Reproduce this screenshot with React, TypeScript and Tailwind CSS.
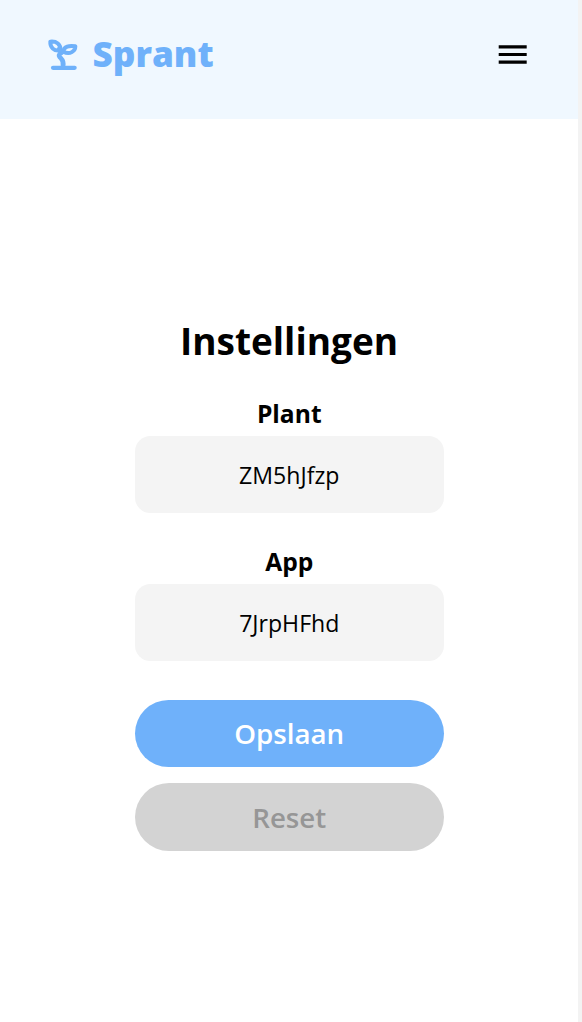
import React from "react";

function SproutIcon() {
  return (
    <svg
      className="h-[50px] w-[50px] shrink-0"
      viewBox="0 0 150 150"
      fill="none"
      stroke="#6fb1fa"
      strokeWidth="12"
      strokeLinecap="round"
      strokeLinejoin="round"
      aria-hidden="true"
    >
      <path d="M39 113.500H104" strokeWidth="12.500" />
      <path d="M69 108C71 99 70 92 63 85C54 77 56 72 66 67" strokeWidth="14" />
      <path d="M61 61C63 43 49 33 31 35C30 52 42 65 61 61Z" />
      <path d="M55 55L66 68" strokeWidth="8" />
      <path d="M70 65C71 49 88 46 106 49C106 63 90 76 70 65Z" />
    </svg>
  );
}

function MenuButton() {
  return (
    <button type="button" aria-label="Menu" className="mt-[45px] mr-[51px] h-[19px] w-7">
      <svg className="block h-[19px] w-7" viewBox="0 0 28 19" overflow="visible" aria-hidden="true">
        <path d="M-0.300 0.200H27.700V3.400H-0.300ZM-0.300 7.900H27.700V11.100H-0.300ZM-0.300 15.600H27.700V18.800H-0.300Z" fill="#000" />
      </svg>
    </button>
  );
}

function Field({ label, value }: { label: string; value: string }) {
  return (
    <div className="flex flex-col items-center">
      <span className="h-[39px] text-[24.600px] leading-[34px] font-bold">{label}</span>
      <div className="flex h-[77px] w-full items-center justify-center rounded-[15.400px] bg-[#f4f4f4] pt-[2px] text-[23.100px]">
        {value}
      </div>
    </div>
  );
}

export default function App() {
  return (
    <div className="flex h-[1022px] w-[582px] overflow-hidden bg-[#f3f3f3] font-['Open_Sans',sans-serif] text-black">
      <div className="flex w-[578px] flex-col bg-white">
        <header className="flex h-[119px] shrink-0 items-start justify-between bg-[#f0f8ff]">
          <div className="flex pt-[30px] pl-10">
            <SproutIcon />
            <span className="ml-[2.500px] text-[35.200px] leading-[47px] font-extrabold text-[#6fb1fa]">
              Sprant
            </span>
          </div>
          <MenuButton />
        </header>
        <main className="ml-[135px] flex w-[308.500px] flex-col pt-[196px]">
          <h1 className="h-[82px] w-[308px] text-center text-[37px] leading-[52px] font-bold">
            Instellingen
          </h1>
          <div className="flex flex-col gap-[31.500px]">
            <Field label="Plant" value="ZM5hJfzp" />
            <Field label="App" value="7JrpHFhd" />
          </div>
          <div className="mt-[39.300px] flex flex-col gap-[15.500px]">
            <button
              type="button"
              className="h-[67.700px] rounded-full bg-[#6fb1fa] text-[27.700px] font-semibold text-white"
            >
              Opslaan
            </button>
            <button
              type="button"
              className="h-[67.700px] rounded-full bg-[#d3d3d3] pt-px text-[27.700px] font-semibold text-[#969696]"
            >
              Reset
            </button>
          </div>
        </main>
      </div>
    </div>
  );
}
